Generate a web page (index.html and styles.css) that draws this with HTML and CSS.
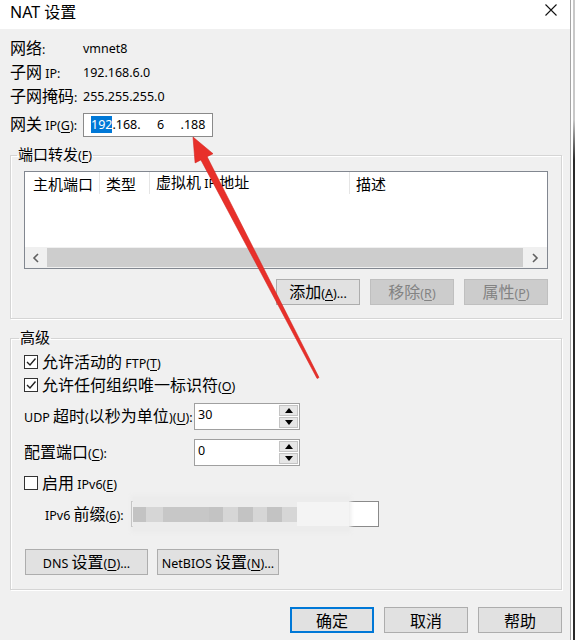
FILE: index.html
```html
<!DOCTYPE html>
<html lang="zh-CN">
<head>
<meta charset="utf-8">
<title>NAT 设置</title>
<link rel="stylesheet" href="styles.css">
</head>
<body>
<div class="screen">
  <div class="dialog">
    <div class="titlebar">
      <span class="title">NAT <span class="zt">设置</span></span>
      <svg class="close" width="12" height="12" viewBox="0 0 12 12"><path d="M0.5 0.5 L11.5 11.5 M11.5 0.5 L0.5 11.5" stroke="#111" stroke-width="1.1" fill="none"/></svg>
    </div>
    <div class="body">
      <div class="info">
        <div class="row"><span class="lbl"><span class="z">网络</span>:</span><span>vmnet8</span></div>
        <div class="row"><span class="lbl"><span class="z">子网</span> IP:</span><span>192.168.6.0</span></div>
        <div class="row"><span class="lbl"><span class="z">子网掩码</span>:</span><span>255.255.255.0</span></div>
        <div class="row gw">
          <span class="lbl"><span class="z">网关</span> IP(<u>G</u>):</span>
          <div class="ipbox"><span class="iptext"><span class="sel">192</span>.168.<span class="f6">6</span>.188</span></div>
        </div>
      </div>

      <fieldset class="group pf">
        <legend><span class="zl">端口转发</span>(<u>F</u>)</legend>
        <div class="list">
          <div class="lhead">
            <div class="col c1"><span class="zl">主机端口</span></div>
            <div class="col c2"><span class="zl">类型</span></div>
            <div class="col c3"><span><span class="zl">虚拟机</span> IP <span class="zl">地址</span></span></div>
            <div class="col c4"><span class="zl">描述</span></div>
          </div>
          <div class="lspace"></div>
          <div class="hscroll">
            <div class="sbtn"><svg width="8" height="10" viewBox="0 0 8 10"><path d="M6 1 L2 5 L6 9" stroke="#606060" stroke-width="1.6" fill="none"/></svg></div>
            <div class="thumb"></div>
            <div class="sbtn r"><svg width="8" height="10" viewBox="0 0 8 10"><path d="M2 1 L6 5 L2 9" stroke="#606060" stroke-width="1.6" fill="none"/></svg></div>
          </div>
        </div>
        <div class="btnrow">
          <button class="btn"><span><span class="z">添加</span>(<u>A</u>)...</span></button>
          <button class="btn dis"><span><span class="z">移除</span>(<u>R</u>)</span></button>
          <button class="btn dis"><span><span class="z">属性</span>(<u>P</u>)</span></button>
        </div>
      </fieldset>

      <fieldset class="group adv">
        <legend><span class="zl">高级</span></legend>
        <div class="cbrow first">
          <span class="cb"><svg width="12" height="12" viewBox="0 0 12 12"><path d="M2 6 L5 9 L10.5 2.5" stroke="#222" stroke-width="1.4" fill="none"/></svg></span>
          <span><span class="z">允许活动的</span> FTP(<u>T</u>)</span>
        </div>
        <div class="cbrow second">
          <span class="cb"><svg width="12" height="12" viewBox="0 0 12 12"><path d="M2 6 L5 9 L10.5 2.5" stroke="#222" stroke-width="1.4" fill="none"/></svg></span>
          <span><span class="z">允许任何组织唯一标识符</span>(<u>O</u>)</span>
        </div>
        <div class="spinrow udp">
          <span class="slbl">UDP <span class="z">超时</span>(<span class="z">以秒为单位</span>)(<u>U</u>):</span>
          <div class="spin">
            <span class="sval">30</span>
            <div class="sp">
              <div class="spb"><svg width="8" height="5" viewBox="0 0 8 5"><path d="M0 5 L4 0 L8 5 Z" fill="#000"/></svg></div>
              <div class="spb"><svg width="8" height="5" viewBox="0 0 8 5"><path d="M0 0 L8 0 L4 5 Z" fill="#000"/></svg></div>
            </div>
          </div>
        </div>
        <div class="spinrow cfg">
          <span class="slbl"><span class="z">配置端口</span>(<u>C</u>):</span>
          <div class="spin">
            <span class="sval">0</span>
            <div class="sp">
              <div class="spb"><svg width="8" height="5" viewBox="0 0 8 5"><path d="M0 5 L4 0 L8 5 Z" fill="#000"/></svg></div>
              <div class="spb"><svg width="8" height="5" viewBox="0 0 8 5"><path d="M0 0 L8 0 L4 5 Z" fill="#000"/></svg></div>
            </div>
          </div>
        </div>
        <div class="cbrow v6">
          <span class="cb"></span>
          <span><span class="z">启用</span> IPv6(<u>E</u>)</span>
        </div>
        <div class="prefixrow">
          <span class="plbl">IPv6 <span class="z">前缀</span>(<u>6</u>):</span>
          <div class="pbox">
            <div class="blur">
              <i class="k1"></i><i class="k2"></i><i class="k3"></i><i class="k1 w14"></i><i class="k2 w15"></i><i class="k1 w15"></i><i class="k2 w14"></i><i class="k1 w15"></i><i class="k2 w15"></i><i class="k4"></i>
            </div>
          </div>
        </div>
        <div class="setrow">
          <button class="btn dns"><span>DNS <span class="z">设置</span>(<u>D</u>)...</span></button>
          <button class="btn nb"><span>NetBIOS <span class="z">设置</span>(<u>N</u>)...</span></button>
        </div>
      </fieldset>

      <div class="footer">
        <button class="btn def"><span class="z">确定</span></button>
        <button class="btn"><span class="z">取消</span></button>
        <button class="btn"><span class="z">帮助</span></button>
      </div>
    </div>
  </div>
  <div class="behind"><div class="bline"></div></div>

  <svg class="arrow" width="576" height="640" viewBox="0 0 576 640">
    <polygon points="193,137 213,153.7 207.1,156.7 319,377.5 317.1,378.5 200.9,159.9 195.1,162.9" fill="#e8302a" stroke="#d42520" stroke-width="0.6" stroke-linejoin="round"/>
  </svg>
</div>
</body>
</html>
```

FILE: styles.css
```css
* { box-sizing: border-box; }
html, body { margin: 0; padding: 0; }
body {
  font-family: "Noto Sans", "Noto Sans CJK SC", sans-serif;
  font-size: 12.5px;
  color: #000;
  background: #fff;
}
u { text-decoration: underline; text-underline-offset: 2px; }
.z { font-family: "Noto Sans CJK SC", sans-serif; font-size: 16px; line-height: 1; }
.zl { font-family: "Noto Sans CJK SC", sans-serif; font-size: 15px; line-height: 1; }
.zt { font-family: "Noto Sans CJK SC", sans-serif; font-size: 16px; }

.screen {
  width: 576px; height: 640px;
  position: relative;
  display: flex;
  overflow: hidden;
  background: #fff;
}
.dialog {
  width: 571px;
  border-right: 1px solid #a5a5a5;
  display: flex; flex-direction: column;
  background: #f0f0f0;
}
.behind { flex: 1; background: #fff; padding-left: 2px; }
.bline { width: 2px; height: 100%; background: linear-gradient(#c8c8c8 0, #c8c8c8 120px, #2a2a2a 160px, #2a2a2a 100%); }

.titlebar {
  height: 29px;
  background: #fff;
  display: flex; align-items: flex-start;
  padding: 1px 0 0 10px;
}
.title { font-size: 16px; line-height: 20px; white-space: nowrap; }
.close { margin-left: auto; margin-right: 13px; margin-top: 3px; }

.body { flex: 1; padding: 7px 8px 0 10px; }

.info .row { display: flex; align-items: center; height: 24px; white-space: nowrap; }
.lbl { width: 73px; }
.info .row.gw { height: 25px; margin-top: 4px; }
.ipbox {
  width: 130px; height: 24px;
  border: 1px solid #8a8a8a;
  background: #fff;
  padding-left: 7px;
  display: flex; align-items: center;
}
.iptext { white-space: pre; }
.sel { background: #0078d7; color: #fff; line-height: 17px; display: inline-block; }
.f6 { display: inline-block; width: 40px; text-align: center; }

.group {
  margin: 0; min-width: 0;
  border: 1px solid #d5d5d5;
  box-shadow: inset 1px 1px 0 #fff, 1px 1px 0 #fff;
  padding: 0 13px 13px 13px;
}
.group legend { padding: 0 1px; line-height: 18px; white-space: nowrap; }
.pf { margin-top: 9px; }
.pf legend { margin-left: -7px; }
.adv { margin-top: 10px; padding-bottom: 14px; }
.adv legend { margin-left: -5px; }

.list {
  margin-top: 6px;
  height: 98px;
  border: 1px solid #828790;
  background: #fff;
  display: flex; flex-direction: column;
}
.lhead { display: flex; height: 24px; }
.col { display: flex; align-items: center; height: 22px; border-right: 1px solid #e5e5e5; white-space: nowrap; }
.c1 { width: 75px; padding-left: 8px; }
.c2 { width: 50px; padding-left: 6px; }
.c3 { width: 200px; padding-left: 6px; }
.c4 { flex: 1; padding-left: 6px; border-right: none; }
.lspace { flex: 1; }
.hscroll { height: 21px; display: flex; background: #f0f0f0; }
.sbtn { width: 22px; display: flex; align-items: center; justify-content: center; }
.sbtn.r { width: 24px; }
.thumb { flex: 1; background: #cdcdcd; margin: 1px 0; }

.btnrow { display: flex; justify-content: flex-end; gap: 10px; margin-top: 10px; }
.btn {
  width: 84px; height: 26px;
  border: 1px solid #adadad;
  background: #e1e1e1;
  font: inherit; color: #000;
  padding: 0;
  display: flex; align-items: center; justify-content: center;
  white-space: nowrap;
}
.btn.dis { background: #cccccc; border-color: #bfbfbf; color: #838383; }

.cbrow { display: flex; align-items: center; height: 20px; gap: 4px; white-space: nowrap; }
.cbrow.first { margin-top: 4px; }
.cbrow.second { margin-top: 3px; }
.cbrow.v6 { margin-top: 7px; }
.cb {
  width: 14px; height: 14px;
  border: 1px solid #333;
  background: #fff;
  display: flex; align-items: center; justify-content: center;
}

.spinrow { display: flex; align-items: center; white-space: nowrap; }
.spinrow.udp { margin-top: 8px; }
.spinrow.cfg { margin-top: 9px; }
.slbl { width: 170px; }
.spin {
  width: 106px; height: 27px;
  border: 1px solid #a0a0a0;
  background: #fff;
  display: flex; align-items: flex-start;
}
.sval { padding: 2px 0 0 3px; line-height: 18px; }
.sp { margin: 1px 1px 1px auto; width: 19px; height: 23px; display: flex; flex-direction: column; gap: 1px; }
.spb {
  flex: 1;
  background: #e6e6e6;
  border: 1px solid #c4c4c4;
  display: flex; align-items: center; justify-content: center;
}

.prefixrow { display: flex; align-items: center; margin-top: 8px; padding-left: 21px; white-space: nowrap; }
.plbl { width: 86px; }
.pbox {
  width: 248px; height: 26px;
  border: 1px solid #8a8a8a;
  background: #fff;
  display: flex; align-items: center;
}
.blur {
  display: flex; align-items: center;
  height: 34px; margin-left: 1px;
  width: 216px;
  background: #ececec;
  box-shadow: 0 0 4px 2px #ececec;
  filter: blur(0.6px);
}
.blur i { display: block; height: 15px; }
.k1 { width: 13px; background: #c3c3c3; }
.k2 { width: 17px; background: #d6d6d6; }
.k3 { width: 46px; background: #c7c7c7; }
.k4 { flex: 1; background: #f4f4f4; height: 24px !important; }
.w14 { width: 14px; }
.w15 { width: 15px; }

.setrow { display: flex; gap: 9px; margin-top: 22px; padding-left: 1px; }
.btn.dns { width: 123px; }
.btn.nb { width: 122px; }

.footer { display: flex; justify-content: flex-end; gap: 10px; margin-top: 17px; }
.footer .btn { height: 26px; }
.btn.def { border: 2px solid #0078d7; }

.arrow { position: absolute; left: 0; top: 0; pointer-events: none; }
```
